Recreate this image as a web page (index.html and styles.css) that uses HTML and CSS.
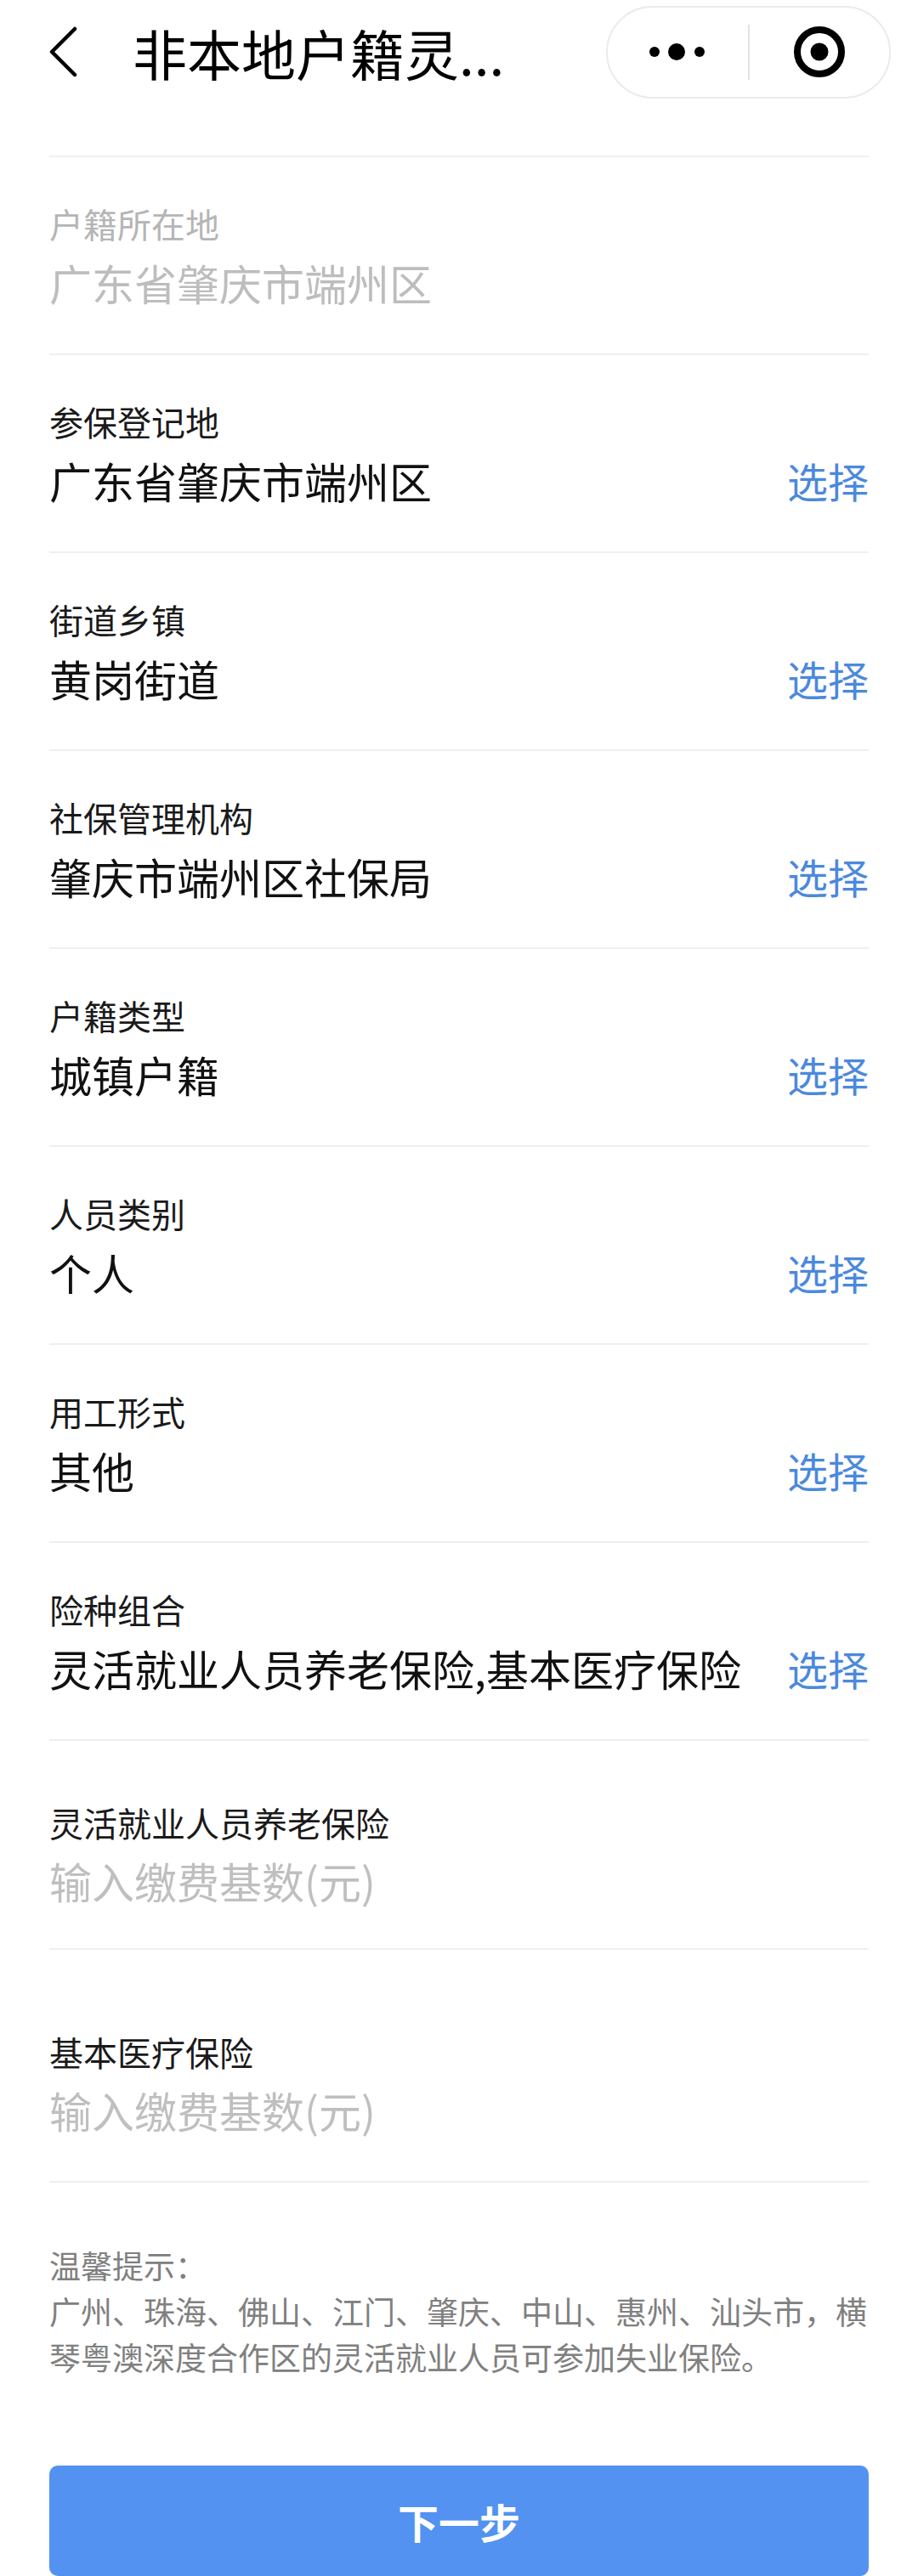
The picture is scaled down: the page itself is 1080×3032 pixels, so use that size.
FILE: index.html
```html
<!DOCTYPE html>
<html lang="zh-CN">

<head>
    <meta charset="UTF-8">
    <title>非本地户籍灵活就业人员参保登记</title>
    <link rel="stylesheet" href="styles.css">
</head>

<body>
    <div class="nav">
        <a class="back" href="#">
            <svg width="34" height="60" viewBox="0 0 34 60">
                <polyline points="30,3 3,30 30,57" fill="none" stroke="#000" stroke-width="4.5" stroke-linecap="round" stroke-linejoin="round"></polyline>
            </svg>
        </a>
        <div class="title">非本地户籍灵...</div>
        <div class="capsule">
            <div class="capsule-btn">
                <svg width="72" height="24" viewBox="0 0 72 24">
                    <circle cx="9" cy="12" r="6"></circle>
                    <circle cx="35" cy="12" r="10"></circle>
                    <circle cx="62" cy="12" r="6"></circle>
                </svg>
            </div>
            <div class="capsule-line"></div>
            <div class="capsule-btn">
                <svg width="64" height="64" viewBox="0 0 64 64">
                    <circle cx="32" cy="32" r="26" fill="none" stroke="#000" stroke-width="8"></circle>
                    <circle cx="32" cy="32" r="10.5"></circle>
                </svg>
            </div>
        </div>
    </div>

    <div class="form">
        <div class="field disabled">
            <div class="label">户籍所在地</div>
            <div class="value-line">
                <div class="value">广东省肇庆市端州区</div>
            </div>
        </div>
        <div class="field">
            <div class="label">参保登记地</div>
            <div class="value-line">
                <div class="value">广东省肇庆市端州区</div>
                <a class="pick" href="#">选择</a>
            </div>
        </div>
        <div class="field">
            <div class="label">街道乡镇</div>
            <div class="value-line">
                <div class="value">黄岗街道</div>
                <a class="pick" href="#">选择</a>
            </div>
        </div>
        <div class="field">
            <div class="label">社保管理机构</div>
            <div class="value-line">
                <div class="value">肇庆市端州区社保局</div>
                <a class="pick" href="#">选择</a>
            </div>
        </div>
        <div class="field">
            <div class="label">户籍类型</div>
            <div class="value-line">
                <div class="value">城镇户籍</div>
                <a class="pick" href="#">选择</a>
            </div>
        </div>
        <div class="field">
            <div class="label">人员类别</div>
            <div class="value-line">
                <div class="value">个人</div>
                <a class="pick" href="#">选择</a>
            </div>
        </div>
        <div class="field">
            <div class="label">用工形式</div>
            <div class="value-line">
                <div class="value">其他</div>
                <a class="pick" href="#">选择</a>
            </div>
        </div>
        <div class="field">
            <div class="label">险种组合</div>
            <div class="value-line">
                <div class="value">灵活就业人员养老保险,基本医疗保险</div>
                <a class="pick" href="#">选择</a>
            </div>
        </div>
        <div class="field field-input">
            <div class="label">灵活就业人员养老保险</div>
            <input class="base-input" type="text" placeholder="输入缴费基数(元)">
        </div>
        <div class="field field-input field-last">
            <div class="label">基本医疗保险</div>
            <input class="base-input" type="text" placeholder="输入缴费基数(元)">
        </div>
    </div>

    <div class="tip">
        <p>温馨提示：</p>
        <p>广州、珠海、佛山、江门、肇庆、中山、惠州、汕头市，横琴粤澳深度合作区的灵活就业人员可参加失业保险。</p>
    </div>

    <a class="next-btn" href="#">下一步</a>
</body>

</html>
```

FILE: styles.css
```css
* {
    padding: 0;
    margin: 0;
    box-sizing: border-box;
}

body {
    background-color: #fff;
    font-family: "Noto Sans CJK SC", "Noto Sans", sans-serif;
    color: #111;
}

a {
    text-decoration: none;
}

/* 顶部导航 */
.nav {
    height: 122px;
    display: flex;
    align-items: center;
    padding: 0 32px 0 58px;
}

.nav .back {
    display: flex;
    width: 34px;
    height: 60px;
}

.nav .title {
    margin-left: 64px;
    font-size: 64px;
    line-height: 1;
    color: #000;
    white-space: nowrap;
}

.capsule {
    margin-left: auto;
    width: 335px;
    height: 109px;
    border: 2px solid #ebebeb;
    border-radius: 55px;
    display: flex;
    align-items: center;
}

.capsule-btn {
    flex: 1;
    display: flex;
    justify-content: center;
    align-items: center;
}

.capsule-line {
    width: 2px;
    height: 65px;
    background-color: #e2e2e2;
}

/* 表单 */
.form {
    margin: 61px 58px 0;
    border-top: 2px solid #efefef;
}

.field {
    padding: 50px 0 49px;
    border-bottom: 2px solid #efefef;
}

.field .label {
    font-size: 40px;
    line-height: 56px;
    color: #1a1a1a;
}

.value-line {
    margin-top: 6px;
    display: flex;
    align-items: center;
}

.value-line .value {
    flex: 1;
    font-size: 50px;
    line-height: 70px;
    color: #111;
}

.value-line .pick {
    font-size: 48px;
    line-height: 70px;
    color: #4b89dc;
}

.disabled .label {
    color: #b5b5b5;
}

.disabled .value-line .value {
    color: #bdbdbd;
}

.field-input {
    padding: 68px 0 45px;
}

.field-last {
    padding: 92px 0 49px;
}

.base-input {
    display: block;
    width: 100%;
    margin-top: 5px;
    height: 70px;
    border: 0;
    outline: none;
    font-family: inherit;
    font-size: 50px;
    color: #111;
    background: transparent;
}

.base-input::placeholder {
    color: #bfbfbf;
}

/* 温馨提示 */
.tip {
    margin: 70px 28px 0 58px;
    font-size: 37px;
    line-height: 54px;
    color: #808080;
}

.next-btn {
    display: block;
    margin: 101px 58px 0;
    height: 130px;
    border-radius: 10px;
    background-color: #5392f0;
    color: #fff;
    font-size: 48px;
    font-weight: 700;
    line-height: 130px;
    text-align: center;
}
```
